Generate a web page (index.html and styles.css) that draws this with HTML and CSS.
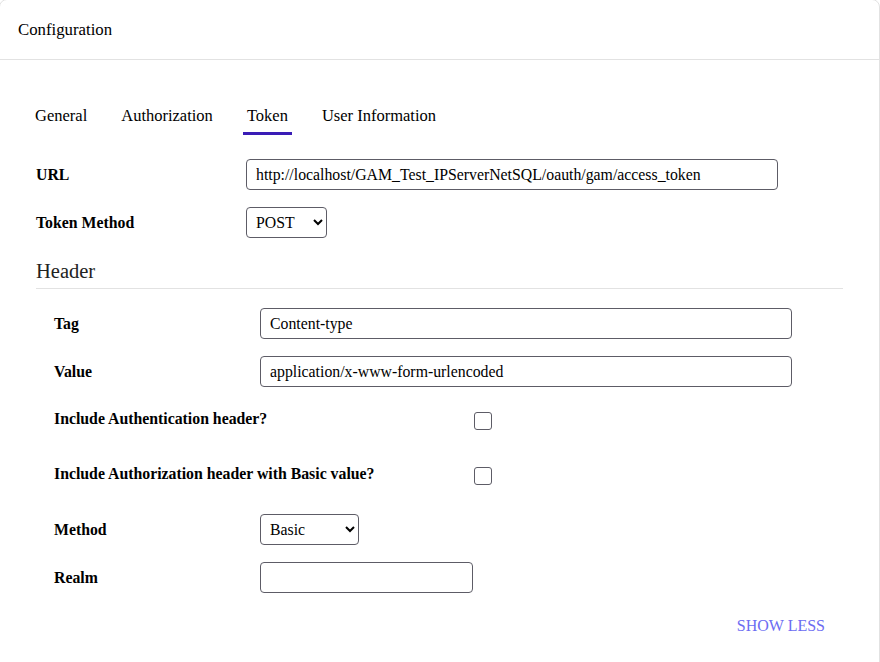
FILE: index.html
```html
<!DOCTYPE html>
<html lang="en">
<head>
<meta charset="utf-8">
<title>Configuration</title>
<link rel="stylesheet" href="styles.css">
</head>
<body>
<div class="card">
  <div class="card-head">Configuration</div>
  <div class="card-body">
    <nav class="tabs">
      <span class="tab">General</span>
      <span class="tab">Authorization</span>
      <span class="tab active">Token</span>
      <span class="tab">User Information</span>
    </nav>
    <div class="form">
      <div class="row">
        <label class="lbl">URL</label>
        <input class="field field-wide" type="text" value="http://localhost/GAM_Test_IPServerNetSQL/oauth/gam/access_token">
      </div>
      <div class="row">
        <label class="lbl">Token Method</label>
        <select class="sel sel-post"><option>POST</option></select>
      </div>
      <h3 class="section-title">Header</h3>
      <div class="sub">
        <div class="row">
          <label class="lbl lbl-sub">Tag</label>
          <input class="field field-wide" type="text" value="Content-type">
        </div>
        <div class="row">
          <label class="lbl lbl-sub">Value</label>
          <input class="field field-wide" type="text" value="application/x-www-form-urlencoded">
        </div>
        <div class="row row-check">
          <label class="lbl lbl-check">Include Authentication header?</label>
          <input class="check" type="checkbox">
        </div>
        <div class="row row-check spaced">
          <label class="lbl lbl-check">Include Authorization header with Basic value?</label>
          <input class="check" type="checkbox">
        </div>
        <div class="row">
          <label class="lbl lbl-sub">Method</label>
          <select class="sel sel-basic"><option>Basic</option></select>
        </div>
        <div class="row">
          <label class="lbl lbl-sub">Realm</label>
          <input class="field field-short" type="text" value="">
        </div>
      </div>
      <div class="actions">
        <a class="show-less">SHOW LESS</a>
      </div>
    </div>
  </div>
</div>
</body>
</html>
```

FILE: styles.css
```css
html, body {
  margin: 0;
  padding: 0;
  background: #ffffff;
  overflow: hidden;
}

body {
  font-family: "Liberation Serif", "Times New Roman", serif;
  font-size: 16px;
  color: #000;
}

.card {
  box-sizing: border-box;
  width: 881px;
  min-height: 700px;
  margin: -1px 0 0 -1px;
  border: 1px solid #e2e2e2;
  border-radius: 8px;
  background: #fff;
}

.card-head {
  height: 59px;
  display: flex;
  align-items: center;
  padding-left: 18px;
  border-bottom: 1px solid #e2e2e2;
  font-size: 16.8px;
}

.card-body {
  padding: 46px 36px 0 36px;
}

.tabs {
  display: flex;
  gap: 26px;
  margin-left: -5px;
}

.tab {
  line-height: 20px;
  padding: 0 4px 6px;
  border-bottom: 3px solid transparent;
  font-size: 16.5px;
}

.tab.active {
  border-bottom-color: #3a1db6;
}

.form {
  margin-top: 24px;
}

.row {
  display: flex;
  align-items: center;
  min-height: 31px;
  font-size: 15.8px;
}

.row + .row {
  margin-top: 17px;
}

.lbl {
  font-weight: bold;
  width: 210px;
  flex: none;
}

.lbl-sub {
  width: 206px;
}

.lbl-check {
  width: 420px;
  margin-top: -3px;
}

.field {
  box-sizing: border-box;
  height: 31px;
  border: 1px solid #5d5c66;
  border-radius: 4px;
  padding: 0 9px;
  font-family: "Liberation Serif", "Times New Roman", serif;
  font-size: 15.8px;
  color: #000;
  background: #fff;
  outline: none;
}

.field-wide {
  width: 532px;
}

.field-short {
  width: 213px;
}

.sel {
  box-sizing: border-box;
  height: 31px;
  border: 1px solid #5d5c66;
  border-radius: 4px;
  padding: 0 4px 0 5px;
  font-family: "Liberation Serif", "Times New Roman", serif;
  font-size: 15.8px;
  color: #000;
  background: #fff;
}

.sel-post {
  width: 81px;
}

.sel-basic {
  width: 99px;
}

.section-title {
  margin: 21px 0 0;
  font-size: 20.5px;
  font-weight: normal;
  line-height: 24px;
  padding-bottom: 5px;
  border-bottom: 1px solid #e2e2e2;
  color: #222;
}

.sub {
  margin-top: 19px;
  padding-left: 18px;
}

.row-check {
  min-height: 33px;
}

.row-check.spaced {
  padding: 5px 0;
}

.check {
  appearance: none;
  -webkit-appearance: none;
  box-sizing: border-box;
  width: 18px;
  height: 18px;
  margin: 0;
  border: 1.5px solid #5d5c66;
  border-radius: 3px;
  background: #fff;
}

.actions {
  display: flex;
  justify-content: flex-end;
  margin-top: 23px;
  padding-right: 18px;
}

.show-less {
  color: #6c6cf2;
  font-size: 16px;
  line-height: 20px;
  cursor: pointer;
}
```
